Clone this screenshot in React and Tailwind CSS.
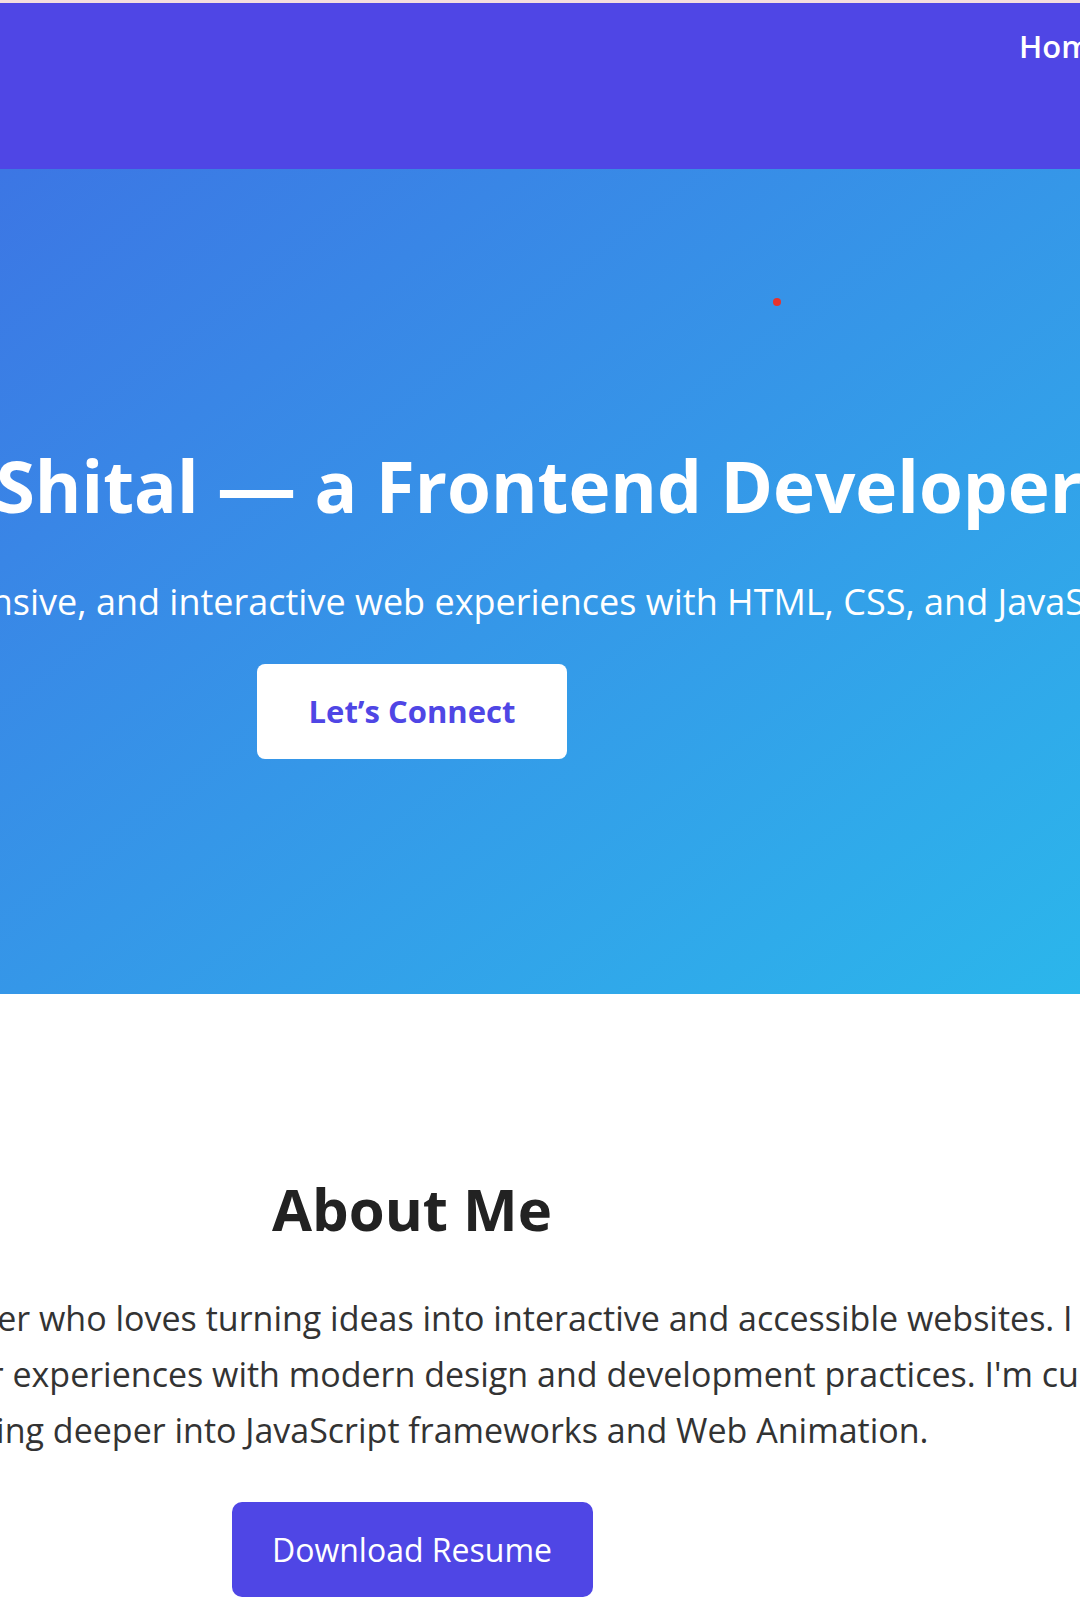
export default function App() {
  return (
    <div className="w-[1080px] h-[1618px] overflow-hidden bg-white font-['Open_Sans','Noto_Sans',sans-serif]">
      <div className="h-[3px] bg-[#f4dede]" />
      <nav className="h-[166px] bg-[#4f46e5] flex items-start gap-10 pl-[1019px] pt-[28px] whitespace-nowrap text-white font-semibold text-[31px] leading-none">
        <a href="#home">Home</a>
        <a href="#about">About</a>
        <a href="#projects">Projects</a>
        <a href="#contact">Contact</a>
      </nav>

      <section className="relative h-[825px] bg-linear-to-br from-[#3c76e4] to-[#2bb6eb]">
        <span className="absolute left-[773px] top-[129px] size-[8px] rounded-full bg-[#e8322c]" />
        <div className="w-[824px] flex flex-col items-center pt-[281px]">
          <h1 className="ml-3 whitespace-nowrap text-[71px] font-bold leading-none text-white">
            Hi, I’m Shital <span className="mx-[4px] inline-block scale-x-[1.12]">—</span> a Frontend Developer
          </h1>
          <p className="mt-[63px] whitespace-nowrap text-[36px] leading-none text-white">
            I create clean, responsive, and interactive web experiences with HTML, CSS, and JavaScript.
          </p>
          <a
            href="#contact"
            className="mt-[44px] flex h-[95px] w-[310px] items-center justify-center rounded-lg bg-white text-[31px] font-bold text-[#4f46e5]"
          >
            Let’s Connect
          </a>
        </div>
      </section>

      <section className="w-[824px] flex flex-col items-center pt-[186px]">
        <h2 className="text-[58px] font-bold leading-none text-[#222222]">About Me</h2>
        <div className="mt-[52px] flex flex-col items-center text-[34px] leading-[56px] text-[#333333] whitespace-nowrap">
          <span>I’m a passionate developer who loves turning ideas into interactive and accessible websites. I focus on</span>
          <span className="ml-[10px]">crafting seamless user experiences with modern design and development practices. I'm currently</span>
          <span>exploring deeper into JavaScript frameworks and Web Animation.</span>
        </div>
        <a
          href="#resume"
          className="mt-[44px] flex h-[95px] w-[361px] items-center justify-center rounded-[10px] bg-[#4f46e5] text-[32px] text-white"
        >
          Download Resume
        </a>
      </section>
    </div>
  );
}
